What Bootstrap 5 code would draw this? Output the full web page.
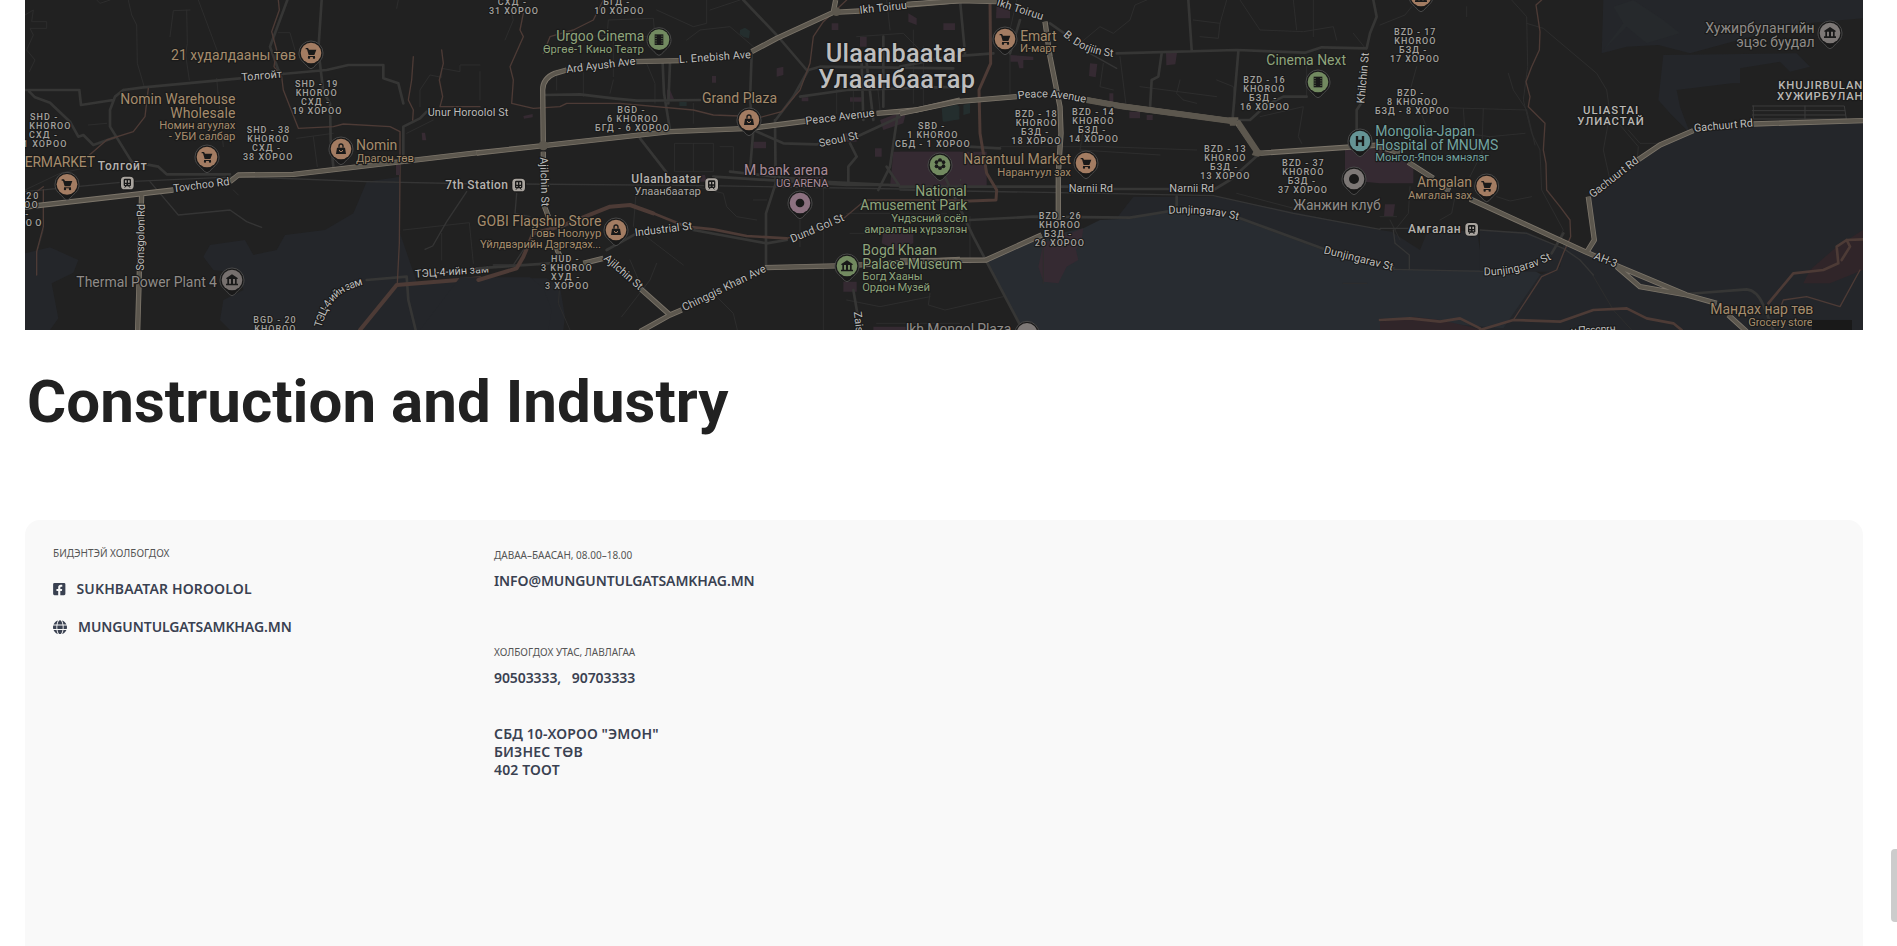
<!DOCTYPE html>
<html lang="mn">
<head>
<meta charset="utf-8">
<meta name="viewport" content="width=device-width, initial-scale=1">
<title>Construction and Industry</title>
<link href="https://cdn.jsdelivr.net/npm/bootstrap@5.3.0/dist/css/bootstrap.min.css" rel="stylesheet">
<style>
html,body{height:100%;overflow:hidden}
body{font-family:"Noto Sans","Open Sans",sans-serif;background:#fff}
.site-shell{padding:0 34px 0 25px}
.city-map{height:330px;background:#212121;font-family:Roboto,"Noto Sans",sans-serif}
.site-title{font:700 60px/70px Roboto,sans-serif;letter-spacing:.06px;color:#212121;margin:37px 0 83px 2px;white-space:nowrap}
.contact-panel{background:#f9f9f9;border-radius:15px 15px 0 0;height:426px;padding:0 28px}
.contact-first{width:441px;padding-top:26px}
.contact-second{padding-top:28px}
.tiny{font-size:10px;line-height:14px;color:#555;white-space:nowrap}
.strong-line{font-size:14px;line-height:18px;font-weight:600;color:#3a4151;white-space:nowrap}
.gap-after{margin-top:20px}
.gap-value{margin-top:10px}
.gap-phone{margin-top:55px}
.gap-address{margin-top:38px}
.link-name{margin-left:11px}
.airy{letter-spacing:.14px}
.snug{letter-spacing:-.09px}
.page-thumb{right:0;top:849px;width:6px;height:73px;background:#ccc;border-radius:4px 0 0 4px}
/* map strokes and labels */
.fine,.minor,.brown,.rail{fill:none;stroke-linejoin:round;stroke-linecap:round}
.fine{stroke:#2d2d2d;stroke-width:3}
.minor{stroke:#363635;stroke-width:8}
.rail{stroke:#353535;stroke-width:4}
.brown{stroke:#4d3b36;stroke-width:4}
.wide{stroke-width:12}
.case{fill:none;stroke:#7c756a;stroke-width:16;stroke-linejoin:round}
.major{fill:none;stroke:#5c574e;stroke-width:11;stroke-linejoin:round}
.city-map text{paint-order:stroke;stroke:#1b1b1b;stroke-width:7px;stroke-linejoin:round}
.poi{font-size:42px}.sub{font-size:34px}
.shop{fill:#a58c6c}.leaf{fill:#8fa57c}.rose{fill:#a98a98}.aqua{fill:#72a3a0}.ash{fill:#8f8b88}
.street{font-size:33px;fill:#bdbdbb}
.khoroo{font-size:27px;font-weight:500;fill:#a3a19e}
.stn{font-size:36px;font-weight:500;fill:#b5b2ae}
.town{font-size:34px;font-weight:500;fill:#b9b7b4}
.city{font-size:76px;font-weight:500;fill:#bebebe}
</style>
</head>
<body>
<div class="site-shell">
<div class="city-map overflow-hidden">
<svg class="d-block" width="1838" height="330" viewBox="25 0 1838 330" role="img" aria-label="Ulaanbaatar">
<defs>
<g id="pin"><path d="M-36 0A36 36 0 1 1 36 0C36 17 27 24 17 33L7 44Q0 50-7 44L-17 33C-27 24-36 17-36 0Z" fill="#191919" stroke="#484848" stroke-width="3"/><circle r="31" fill="currentColor"/></g>
<g id="cart" fill="#191919"><path d="M-16-15h7l3 5H16L10 6H-7L-12-11h-4z"/><path d="M-9 9H12v3H-9z"/><circle cx="-6" cy="14" r="3.5"/><circle cx="9" cy="14" r="3.5"/></g>
<g id="bag"><path d="M-15 15L-12-4H12L15 15Z" fill="#191919"/><path d="M-6-4V-9a6 6 0 0 1 12 0v5" fill="none" stroke="#191919" stroke-width="4"/><path d="M-5 3a5 5 0 0 0 10 0" fill="none" stroke="currentColor" stroke-width="3"/></g>
<g id="film"><path d="M-13-16H13V16H-13Z" fill="#191919"/><path d="M-9-12v25M9-12v25" stroke="currentColor" stroke-width="3" stroke-dasharray="3 4"/></g>
<g id="hall" fill="#191919"><path d="M-17-6L0-17 17-6V-3H-17zM-14-3h5V11h-5zM-3-3h6V11h-6zM9-3h5V11H9zM-18 11H18v5H-18z"/></g>
<g id="flower" fill="#191919"><circle cy="-11" r="6"/><circle cx="10" cy="-5" r="6"/><circle cx="-10" cy="-5" r="6"/><circle cx="10" cy="7" r="6"/><circle cx="-10" cy="7" r="6"/><circle cy="12" r="6"/><circle r="6" fill="none" stroke="currentColor" stroke-width="3"/></g>
<g id="train"><circle r="23" fill="#191919"/><rect x="-19" y="-19" width="38" height="38" rx="11" fill="#aaa59f"/><rect x="-11" y="-13" width="22" height="23" rx="4" fill="#191919"/><path d="M-7-8h5v7h-5zM2-8h5v7H2zM-7 3h4v3h-4zM3 3h4v3H3z" fill="#aaa59f"/><path d="M-8 14l4-5M8 14L4 9" stroke="#191919" stroke-width="3"/></g>
</defs>

<!-- west -->
<g transform="scale(.33333)">
<path fill="#24262a" d="M75 760L150 742 235 780 220 818 155 850 175 955 150 990H75ZM610 770L630 735 735 720 760 765 830 750 855 705 975 690 1060 640 1100 545 1200 530V700L1300 990H690L660 960 670 900 730 870 720 820 640 810ZM1195 850L1440 835H1640L1680 860 1695 950 1690 990H1195Z"/>
<g class="fine"><path d="M75 45L100 30 95 65H140V85H90L100 105 80 150 105 180 88 215M330 0L300 10 290 0M385 0L395 45 410 75 412 190 432 258M510 110L520 32 570 30M560 30L562 130 557 165 568 240M595 0L662 180M835 98H870L885 150M890 415L1000 400M940 410L952 500M265 375L320 370M650 235L658 320 670 440M1220 400L1300 360M1210 690L1408 668 1420 790M1325 700V780M1195 0L1190 25M1260 320V270L1290 225 1325 232V205L1380 215V195H1440M130 690L110 760M700 570L715 585M75 570L180 520 270 500M1440 215V300"/></g>
<g class="minor"><path d="M75 270H238L243 315 340 300M88 275L105 292 150 308 210 365 235 410 250 405 280 435 350 410M862 0L810 140 835 210 850 222M965 0L955 150 970 275 990 310 992 420 1000 500M370 270L345 290 330 330V380L395 485 475 500 500 523H690M370 270L430 262 720 235M846 222L980 210 1045 195H1150V235L1195 250 1210 310M1210 480V380L1260 355 1280 335M1220 830L1225 900 1247 990M1100 840L1220 830" /></g>
<path class="rail" d="M75 575L385 545 720 530 1100 545 1440 552M450 545L480 580 535 645 690 630 740 665 785 682M1275 748L1298 738 1340 665 1400 575"/>
<path class="brown" d="M835 0L838 30 815 95 830 150 822 200 845 230 850 270 895 385 1000 380 1030 372 1170 380 1200 395V520L1198 730 1192 850M445 265L435 350 400 395 320 420 240 490M130 560L75 600M130 570V680L110 755V825M1240 170L1235 240 1225 300 1240 330 1238 360M1325 150L1330 190 1318 240 1328 290 1320 320H1440"/>
<path class="brown wide" d="M1080 990L1190 855 1440 835"/>
<path fill="#372b33" d="M1265 398h10l4 23h-12zM1188 495h12v30h-12z"/>
<path class="case" d="M75 621L520 570M690 545L715 525 880 523 1440 457M425 580L413 990"/><path class="major" d="M75 621L520 570M690 545L715 525 880 523 1440 457M425 580L413 990"/>
<g color="#a37c62"><use href="#pin" x="933" y="159"/><use href="#cart" x="933" y="159"/><use href="#pin" x="621" y="471"/><use href="#cart" x="621" y="471"/><use href="#pin" x="201" y="553"/><use href="#cart" x="201" y="553"/><use href="#pin" x="1023" y="447"/><use href="#bag" x="1023" y="447"/></g>
<g color="#76706e"><use href="#pin" x="696" y="840"/><use href="#hall" x="696" y="840"/></g>
<use href="#train" x="382" y="549"/>
<text class="poi shop" x="513" y="180" textLength="375">21 худалдааны төв</text>
<text class="poi shop" x="361" y="313" textLength="345">Nomin Warehouse</text>
<text class="poi shop" x="511" y="355" textLength="195">Wholesale</text>
<text class="sub shop" x="478" y="388" textLength="228">Номин агуулах</text>
<text class="sub shop" x="506" y="420" textLength="200">- УБИ салбар</text>
<text class="poi shop" x="1068" y="451" textLength="124">Nomin</text>
<text class="sub shop" x="1068" y="486" textLength="174">Драгон төв</text>
<text class="poi shop" x="74" y="502" textLength="211">ERMARKET</text>
<text class="stn" x="293" y="511" textLength="147">Толгойт</text>
<text class="poi ash" x="229" y="862" textLength="422">Thermal Power Plant 4</text>
<g class="khoroo"><text x="885" y="262" textLength="127">SHD - 19</text><text x="887" y="289" textLength="123">KHOROO</text><text x="903" y="316" textLength="84">СХД -</text><text x="877" y="343" textLength="147">19 ХОРОО</text>
<text x="740" y="399" textLength="128">SHD - 38</text><text x="742" y="426" textLength="123">KHOROO</text><text x="756" y="453" textLength="84">СХД -</text><text x="729" y="480" textLength="148">38 ХОРОО</text>
<text x="90" y="360" textLength="82">SHD -</text><text x="88" y="387" textLength="123">KHOROO</text><text x="87" y="414" textLength="84">СХД -</text><text x="50" y="441" textLength="149">11 ХОРОО</text>
<text x="79" y="597" textLength="36">20</text><text x="72" y="624" textLength="41">OO</text><text x="76" y="651">-</text><text x="50" y="678" textLength="74">РОО</text>
<text x="760" y="969" textLength="127">BGD - 20</text><text x="763" y="996" textLength="123">KHOROO</text></g>
<g class="street"><text transform="translate(725 243) rotate(-5)" textLength="122">Толгойт</text><text transform="translate(521 577) rotate(-7.500)" textLength="170">Tovchoo Rd</text><text transform="translate(431 812) rotate(-89)" textLength="200">Sonsgolon Rd</text>
<text x="1283" y="348" textLength="242">Unur Horoolol St</text><path id="tec" d="M964 984C990 895 1020 870 1110 849" fill="none"/><text><textPath href="#tec" textLength="192">ТЭЦ-4-ийн зам</textPath></text><text transform="translate(1246 833) rotate(-4)" textLength="222">ТЭЦ-4-ийн зам</text></g>
<text class="stn" x="1336" y="567" textLength="188">7th Station</text>
</g>

<!-- centre -->
<g transform="translate(480) scale(.33333)">
<path fill="#24262a" d="M-60 832H150L190 865 215 930 205 990H-180Z"/>
<g fill="#352a32"><path d="M1240 455H1520V560H1230ZM1210 690H1300V730L1250 750 1205 730ZM1090 845h40v30h-40zM568 265l15 35h-22v-30zM130 348l28-6v10l-26 4zM696 228h12v20h-12zM890 205l20-5v25l-20 5zM1055 70h20v20h-20zM965 292h20v12h-20zM1110 292h35v13h-35zM820 425h38v20h-38zM1185 445h20v25h-20zM1140 110h20v30h-20zM1090 400h40v25h-40zM1180 980h120v10h-120zM920 530h110v15H920zM1390 70h35v20h-35zM1285 40l25 15v20l-25-10zM1200 360l80-30-10 40-60 20zM580 525h95l5 20H580z"/></g>
<g fill="#242e2e"><path d="M780 90l15-7 15 10-3 22-16-4-12-8zM1390 328l48-10v40l-48 8zM598 306h22v12h-22z"/></g>
<g class="fine"><path d="M275 95L310 110 400 105V230M380 120L385 60 520 55 525 110H380M530 30L640 80 680 70V0M620 120L660 90 750 80 820 140M500 190L525 250V310M400 240L390 280M640 310V370M585 430H700V515H585ZM640 430V515M720 440H760V515M650 560L730 580 740 620 770 650 830 660M470 560L460 680 610 795M530 790L510 840 425 950M710 890L760 940 772 990M240 850L235 910 270 990M480 850L450 780M1030 560V990M960 660V740M1100 640H1400M1110 700H1200M820 600H860M1100 900L1200 920 1350 890M1190 970H1440M230 210V270M310 190V290M85 0L100 60 75 120M780 0L690 30M1130 110L1270 100 1340 170M1220 0L1230 90M1300 90V310M1330 140V330M1070 260V340M1120 240V340M1190 230L1200 330"/></g>
<g class="minor"><path d="M190 285L300 283 400 295 470 302 660 300M548 190L552 280 570 390M570 190L565 310M480 415L560 518M815 165L810 300 820 390 810 510M885 360L887 550 858 640V800M887 360L940 290 985 210 1020 200 1420 205M980 210L890 105 790 0M820 390L910 430 1010 433M1010 433L1130 410 1260 350M1110 430L1130 470 1105 500V550M1145 190L1150 360M1255 330L1230 500 1195 570M1210 110V320M750 515L1020 545 1440 565M700 530L1100 555H1440M1220 500L1260 560M1180 360L1160 190M960 290L1100 270 1440 260M1120 870L1132 940M1380 535L1440 540M640 690L860 730 920 720M380 750L470 700M-10 805L210 790"/></g>
<path class="rail" d="M120 552L680 557 1440 570M110 580L105 640 150 650M40 795L100 795 130 750"/>
<path class="brown" d="M130 40L120 90 130 110 90 200 100 240 95 310 160 325 240 320 260 310 420 310 640 330 700 345 780 348 830 355 905 335 960 270 990 190 1000 110 1030 65 1100 0M370 0L340 60 280 90 210 110 190 160M1160 600H1440M1145 610L1085 660M1040 680L920 715"/>
<path class="brown wide" d="M-5 840L110 805 130 770 160 700 240 680 390 620 450 615 520 640"/><path class="brown" style="stroke-width:8" d="M520 640L620 680 700 688 800 708 920 715"/>
<path class="case" d="M-10 459L190 437 570 395 810 385 980 363M1190 340L1310 330 1440 300M190 437L188 270Q188 235 225 220L260 210M460 185L600 182M815 155L890 115 1060 37 1067 0M1060 37L1140 33M1280 15L1440 2M190 455V475M190 610L205 650M228 740L240 770M310 790L370 775M480 865L570 945 480 995M570 945L605 930M855 803L1100 797 1440 778"/>
<path class="major" d="M-10 459L190 437 570 395 810 385 980 363M1190 340L1310 330 1440 300M190 437L188 270Q188 235 225 220L260 210M460 185L600 182M815 155L890 115 1060 37 1067 0M1060 37L1140 33M1280 15L1440 2M190 455V475M190 610L205 650M228 740L240 770M310 790L370 775M480 865L570 945 480 995M570 945L605 930M855 803L1100 797 1440 778"/>
<circle cx="190" cy="437" r="14" fill="#5c574e"/><circle cx="1069" cy="35" r="13" fill="#5c574e"/>
<g color="#728a60"><use href="#pin" x="537" y="119"/><use href="#film" x="537" y="119"/><use href="#pin" x="1101" y="798"/><use href="#hall" x="1101" y="798"/></g>
<g color="#a37c62"><use href="#pin" x="807" y="360"/><use href="#bag" x="807" y="360"/><use href="#pin" x="408" y="690"/><use href="#bag" x="408" y="690"/></g>
<g color="#8c7180"><use href="#pin" x="960" y="609"/></g><circle cx="960" cy="609" r="13" fill="#191919"/>
<use href="#train" x="116" y="555"/><use href="#train" x="695" y="554"/>
<text class="poi leaf" x="229" y="124" textLength="264">Urgoo Cinema</text><text class="sub leaf" x="189" y="159" textLength="303">Өргөө-1 Кино Театр</text>
<text class="poi shop" x="666" y="310" textLength="225">Grand Plaza</text>
<text class="poi rose" x="792" y="526" textLength="252">M bank arena</text><text class="sub rose" x="888" y="560" textLength="157">UG ARENA</text>
<text class="poi shop" x="-9" y="679" textLength="373">GOBI Flagship Store</text><text class="sub shop" x="153" y="712" textLength="211">Говь Ноолуур</text><text class="sub shop" x="0" y="745" textLength="363">Үйлдвэрийн Дэргэдэх...</text>
<text class="stn" x="454" y="550" textLength="209">Ulaanbaatar</text><text class="sub" fill="#a9a6a3" x="463" y="584" textLength="200">Улаанбаатар</text>
<text class="poi leaf" x="1147" y="765" textLength="224">Bogd Khaan</text><text class="sub leaf" x="1147" y="840" textLength="181">Богд Хааны</text><text class="sub leaf" x="1147" y="873" textLength="203">Ордон Музей</text>
<text class="poi ash" x="1277" y="1002" textLength="317">Ikh Mongol Plaza</text>
<g class="khoroo"><text x="53" y="16" textLength="85">СХД -</text><text x="27" y="43" textLength="147">31 ХОРОО</text><text x="370" y="16" textLength="78">БГД -</text><text x="343" y="43" textLength="147">10 ХОРОО</text>
<text x="412" y="339" textLength="82">BGD -</text><text x="381" y="366" textLength="152">6 KHOROO</text><text x="345" y="393" textLength="222">БГД - 6 ХОРОО</text>
<text x="213" y="786" textLength="83">HUD -</text><text x="183" y="813" textLength="152">3 KHOROO</text><text x="213" y="840" textLength="85">ХУД -</text><text x="195" y="867" textLength="130">3 ХОРОО</text></g>
<g class="street"><text transform="translate(260 219) rotate(-7)" textLength="209">Ard Ayush Ave</text><text transform="translate(598 189) rotate(-4)" textLength="216">L. Enebish Ave</text><text transform="translate(1140 41) rotate(-6)" textLength="143">Ikh Toiruu</text><text transform="translate(978 374) rotate(-7)" textLength="208">Peace Avenue</text><text transform="translate(1019 441) rotate(-12)" textLength="120">Seoul St</text><text transform="translate(180 472) rotate(88)" textLength="148">Ajilchin St</text><text transform="translate(466 709) rotate(-7)" textLength="173">Industrial St</text><text transform="translate(937 728) rotate(-23)" textLength="171">Dund Gol St</text><text transform="translate(370 778) rotate(41)" textLength="142">Ajilchin St</text><text transform="translate(613 934) rotate(-26)" textLength="275">Chinggis Khan Ave</text><text transform="translate(1121 936) rotate(83)">Zaisan</text></g>
</g>

<!-- east centre -->
<g transform="translate(900) scale(.33333)">
<path fill="#24262a" d="M650 655L700 590 950 590 1200 640 1440 690 1475 695 1560 750 1580 700 1730 690 1750 810 1440 810 1280 750 1010 655 690 655Z"/>
<path fill="#282c31" d="M258 785L430 710 550 685 600 660 700 655 800 630 1010 655 1270 750 1450 810H1900L1935 830 1860 960 1900 990H368Z"/>
<g fill="#352a32"><path d="M430 730L550 685 545 720 528 750 535 780 500 800 475 850 430 845 415 800ZM570 190l22 2-5 40-20-4zM798 158h33l-5 35-27 3zM290 5l40 5v45h-42zM330 165l70 5v10h-30v25h-12l-5-20h-22zM628 280h12v40h-12zM688 335h32v20h-32zM740 345h18v15h-18zM1335 450L1440 445 1540 500 1540 550 1440 550 1335 540ZM1455 613h30l-5 35h-28zM0 455H180V560H0Z"/></g>
<path fill="#242e2e" d="M125 325l48-12 5 45-50 5zM190 315l20-5v30l-20 5z"/>
<g class="fine"><path d="M350 0L330 90V280M740 0L705 15 690 60 640 100 600 80 540 130M880 60L960 70 980 0M960 70L955 115 900 110M1020 0L1080 90 1210 95 1300 80 1310 120M1180 0L1190 90M1240 0V110M640 270L600 260 610 190M660 170L680 330M840 240L830 280 850 300M560 330L540 450 780 465M1080 350L1210 320 1195 410 1205 430M950 240L1000 260 1005 310M300 440L610 440 890 450M1220 170V290M90 880L85 915 135 930 310 890M210 650V790M430 740V850M1330 850H1400M1010 580L1200 630M1360 100L1400 150M850 300L890 310M720 260L950 290"/></g>
<g class="minor"><path d="M650 160L1010 150 1215 158 1265 142 1400 145 1410 100 1430 50 1420 0M1015 155L998 355M785 160L775 230 755 240 750 325M865 0L875 150M450 70L500 105M1000 360H1050L1100 315 1150 290H1220M0 560H505M210 660L400 650 690 653 830 630V590M1080 460L990 540 940 570M640 567H810M130 520L220 710 368 990M205 440L300 445M1370 390V330L1390 300M0 200L150 170 280 160M330 160L360 60M180 0L195 160M1020 655L1280 750M1450 803H1480"/></g>
<path class="rail" d="M0 570L600 580 940 587 1180 640 1440 688M560 155L650 205"/>
<path class="brown" style="stroke-width:9" d="M270 0L272 190 237 270 240 400 260 520 290 570 288 600 150 605"/>
<path class="case" d="M20 13L180 2 290 5M0 340L170 305 350 290M560 300L660 318 1010 365M435 65L450 170 480 320 483 400 475 520V660M425 705L258 780 0 783M1010 365L1075 460 1440 435"/>
<path class="major" d="M20 13L180 2 290 5M0 340L170 305 350 290M560 300L660 318 1010 365M435 65L450 170 480 320 483 400 475 520V660M425 705L258 780 0 783M1010 365L1075 460 1440 435"/>
<path d="M560 300L660 318 1010 365" stroke="#5c574e" stroke-width="18" fill="none"/><path fill="#5c574e" d="M985 352h30v25h-25zM1000 365l60 90-5 10 20 5 25-10-20-10-60-90z"/>
<g color="#a37c62"><use href="#pin" x="315" y="117"/><use href="#cart" x="315" y="117"/><use href="#pin" x="558" y="489"/><use href="#cart" x="558" y="489"/></g>
<g color="#728a60"><use href="#pin" x="120" y="495"/><use href="#flower" x="120" y="492"/><use href="#pin" x="1254" y="246"/><use href="#film" x="1254" y="246"/></g>
<g color="#7d7876"><use href="#pin" x="1362" y="537"/><use href="#pin" x="381" y="1000"/></g><circle cx="1362" cy="537" r="15" fill="#191919"/>
<text class="poi leaf" x="46" y="588" textLength="154">National</text><text class="poi leaf" x="-119" y="630" textLength="321">Amusement Park</text><text class="sub leaf" x="-26" y="666" textLength="229">Үндэсний соёл</text><text class="sub leaf" x="-107" y="699" textLength="309">амралтын хүрээлэн</text><text class="poi leaf" x="-113" y="807" textLength="299">Palace Museum</text>
<text class="city" x="-223" y="186" textLength="419">Ulaanbaatar</text><text class="city" x="-245" y="263" textLength="470">Улаанбаатар</text>
<text class="poi shop" x="361" y="124" textLength="109">Emart</text><text class="sub shop" x="360" y="155" textLength="109">И-март</text>
<text class="poi shop" x="190" y="493" textLength="323">Narantuul Market</text><text class="sub shop" x="292" y="528" textLength="221">Нарантуул зах</text>
<text class="poi leaf" x="1099" y="196" textLength="239">Cinema Next</text>
<g class="khoroo"><text x="54" y="388" textLength="79">SBD -</text><text x="22" y="415" textLength="150">1 KHOROO</text><text x="-15" y="442" textLength="224">СБД - 1 ХОРОО</text>
<text x="345" y="351" textLength="125">BZD - 18</text><text x="347" y="378" textLength="123">KHOROO</text><text x="363" y="405" textLength="82">БЗД -</text><text x="334" y="432" textLength="147">18 ХОРОО</text>
<text x="516" y="345" textLength="125">BZD - 14</text><text x="517" y="372" textLength="123">KHOROO</text><text x="534" y="399" textLength="82">БЗД -</text><text x="507" y="426" textLength="147">14 ХОРОО</text>
<text x="1030" y="249" textLength="124">BZD - 16</text><text x="1030" y="276" textLength="123">KHOROO</text><text x="1047" y="303" textLength="82">БЗД -</text><text x="1020" y="330" textLength="147">16 ХОРОО</text>
<text x="912" y="456" textLength="125">BZD - 13</text><text x="913" y="483" textLength="123">KHOROO</text><text x="930" y="510" textLength="82">БЗД -</text><text x="901" y="537" textLength="147">13 ХОРОО</text>
<text x="1146" y="498" textLength="125">BZD - 37</text><text x="1147" y="525" textLength="123">KHOROO</text><text x="1163" y="552" textLength="82">БЗД -</text><text x="1134" y="579" textLength="147">37 ХОРОО</text>
<text x="416" y="657" textLength="126">BZD - 26</text><text x="417" y="684" textLength="123">KHOROO</text><text x="432" y="711" textLength="82">БЗД -</text><text x="404" y="738" textLength="148">26 ХОРОО</text></g>
<g class="street"><text transform="translate(289 16) rotate(18)" textLength="144">Ikh Toiruu</text><path id="dorj" d="M488 106Q550 165 645 171" fill="none"/><text><textPath href="#dorj" textLength="168">B. Dorjiin St</textPath></text><path id="peace" d="M355 298Q450 282 555 309" fill="none"/><text><textPath href="#peace" textLength="202">Peace Avenue</textPath></text><text x="506" y="577" textLength="133">Narnii Rd</text><text x="808" y="577" textLength="134">Narnii Rd</text><path id="dun" d="M805 641Q920 635 1015 661" fill="none"/><text><textPath href="#dun" textLength="211">Dunjingarav St</textPath></text><text transform="translate(1393 311) rotate(-85)" textLength="153">Khilchin St</text></g>
</g>

<!-- east -->
<g transform="translate(1380) scale(.33333)">
<path fill="#24262a" d="M670 0H1449V55L1280 70 1150 100 930 160 835 135 740 140 665 160ZM850 165L1250 160 1290 200 1230 215 1200 185 1080 205 1080 250 1055 250 890 270 900 320 930 400 870 340 835 300ZM940 395L1120 375 1449 365V990H0V955L370 985 480 825 540 800 550 730 620 750 645 720 625 590 840 435Z"/>
<path fill="#24262a" d="M300 692L440 695 560 750 530 815H300Z"/>
<path fill="#282c2d" opacity=".5" d="M700 20L760 0 850 60 900 100 800 130 740 80 670 150 730 70Z"/>
<path fill="#302529" d="M0 965L100 950 180 960 270 980 300 990H0ZM1270 850L1290 810 1370 740 1449 690V810L1350 850Z"/>
<g class="fine"><path d="M0 75L75 45 95 20M260 20V50M110 200L85 290M85 320L440 330M250 325L255 400 330 410 300 470 270 530M310 325L305 470M125 345L160 430M395 0L440 50 443 200 430 300 455 400 480 450 485 570 550 690 510 770M440 70L490 85 650 220 680 270 690 340 670 450 690 540M690 340L775 440 770 500M745 390L780 430H850M385 220L400 270 440 330 465 435M0 650H50M45 690L85 640 90 560M60 720L30 660M180 660L215 640 225 590M350 590L390 603 455 590M330 410L435 400M635 820L700 930 755 990"/><path d="M1117 318H1393L1399 357H1120V318M1117 332H1395M1117 345H1397M1275 318V357" stroke="#3b3b3b"/></g>
<g class="minor"><path d="M550 700L515 760M920 882L1100 868Q1130 870 1150 915L1180 990" /></g><path class="rail" d="M0 685H240M300 690L440 700 550 745 600 780 640 825M40 690L45 730 88 765V810M40 808L310 814"/>
<path class="brown" d="M485 0L468 15 480 95 478 150 455 200 438 245 450 290 445 320 495 370 490 450 498 490 500 570 540 620 570 660 572 710 550 760 530 810 485 830 400 960M1195 940L1210 900 1280 890 1380 920 1440 810"/>
<path class="brown" style="stroke-width:8" d="M300 990L400 960 540 965 640 930 740 925 800 955 880 970 905 990M0 960L90 955 180 965 240 955 300 985M1165 910L1240 820 1330 810 1375 790 1370 740 1400 720 1449 718M1400 720L1410 740 1385 780"/>
<path class="case" d="M85 487L160 535M195 565L210 572M270 597L620 757 650 770M705 795L920 885 1010 910M710 800L780 860 920 885M620 757L643 720 625 590M770 482L840 435 940 392M1120 372L1449 362M1045 945L1100 995M-15 436L60 460"/>
<path class="major" d="M85 487L160 535M195 565L210 572M270 597L620 757 650 770M705 795L920 885 1010 910M710 800L780 860 920 885M620 757L643 720 625 590M770 482L840 435 940 392M1120 372L1449 362M1045 945L1100 995M-15 436L60 460"/>
<g color="#659495"><use href="#pin" x="-60" y="423"/></g><path d="M-69 408v30M-51 408v30M-69 423h20" stroke="#191919" stroke-width="7"/>
<g color="#a37c62"><use href="#pin" x="123" y="-12"/><use href="#hall" x="123" y="-10"/><use href="#pin" x="320" y="558"/><use href="#cart" x="320" y="558"/></g>
<g color="#7d7876"><use href="#pin" x="1350" y="99"/><use href="#hall" x="1350" y="98"/></g><use href="#train" x="275" y="688"/>
<text class="poi ash" x="-260" y="631" textLength="262">Жанжин клуб</text>
<text class="poi ash" x="976" y="100" textLength="328">Хужирбулангийн</text><text class="poi ash" x="1069" y="142" textLength="235">эцэс буудал</text>
<text class="poi aqua" x="-14" y="409" textLength="299">Mongolia-Japan</text><text class="poi aqua" x="-14" y="451" textLength="369">Hospital of MNUMS</text><text class="sub aqua" x="-14" y="483" textLength="341">Монгол-Япон эмнэлэг</text>
<text class="poi shop" x="111" y="562" textLength="165">Amgalan</text><text class="sub shop" x="84" y="597" textLength="192">Амгалан зах</text><text class="stn" x="84" y="700" textLength="158">Амгалан</text>
<text class="poi shop" x="991" y="942" textLength="309">Мандах нар төв</text><text class="sub shop" x="1105" y="978" textLength="193">Grocery store</text><rect x="1296" y="960" width="120" height="30" fill="#191919"/>
<g class="town"><text x="609" y="342" textLength="166">ULIASTAI</text><text x="592" y="375" textLength="199">УЛИАСТАЙ</text><text x="1195" y="267" textLength="252">KHUJIRBULAN</text><text x="1191" y="300" textLength="257">ХУЖИРБУЛАН</text></g>
<g class="khoroo"><text x="42" y="105" textLength="124">BZD - 17</text><text x="43" y="132" textLength="123">KHOROO</text><text x="57" y="159" textLength="82">БЗД -</text><text x="30" y="186" textLength="147">17 ХОРОО</text><text x="51" y="288" textLength="79">BZD -</text><text x="21" y="315" textLength="151">8 KHOROO</text><text x="-15" y="342" textLength="222">БЗД - 8 ХОРОО</text></g>
<g class="street"><text transform="translate(-170 760) rotate(14)" textLength="213">Dunjingarav St</text><text transform="translate(943 395) rotate(-5)" textLength="177">Gachuurt Rd</text><text transform="translate(638 595) rotate(-38)" textLength="178">Gachuurt Rd</text><path id="dun2" d="M311 826Q420 828 517 776" fill="none"/><text><textPath href="#dun2" textLength="212">Dunjingarav St</textPath></text><text transform="translate(640 776) rotate(22)" textLength="72">AH-3</text><text transform="translate(572 1004) rotate(-3)" textLength="136">ц Песоргч</text></g>
</g>
</svg>
</div>
<h1 class="site-title">Construction and Industry</h1>
<section class="contact-panel d-flex">
<div class="contact-first flex-shrink-0">
<div class="tiny">БИДЭНТЭЙ ХОЛБОГДОХ</div>
<div class="strong-line gap-after d-flex align-items-center"><svg width="12.500" height="14" viewBox="0 0 448 512" fill="currentColor"><path d="M400 32H48A48 48 0 0 0 0 80v352a48 48 0 0 0 48 48h137.250V327.690h-63V256h63v-54.640c0-62.150 37-96.480 93.670-96.480 27.140 0 55.520 4.840 55.520 4.840v61h-31.270c-30.810 0-40.420 19.120-40.420 38.730V256h68.780l-11 71.690h-57.780V480H400a48 48 0 0 0 48-48V80a48 48 0 0 0-48-48z"/></svg><span class="link-name airy">SUKHBAATAR HOROOLOL</span></div>
<div class="strong-line gap-after d-flex align-items-center"><svg width="14" height="14.500" viewBox="0 0 496 512" fill="currentColor"><path d="M336.500 160C322 70.700 287.800 8 248 8s-74 62.700-88.500 152h177zM152 256c0 22.200 1.200 43.500 3.300 64h185.300c2.100-20.500 3.300-41.800 3.300-64s-1.200-43.500-3.300-64H155.300c-2.100 20.500-3.300 41.800-3.300 64zm324.700-96c-28.600-67.900-86.500-120.400-158-141.600 24.400 33.800 41.200 84.700 50 141.600h108zM177.200 18.400C105.800 39.600 47.800 92.100 19.300 160h108c8.700-56.900 25.500-107.800 49.900-141.600zM487.400 192H372.700c2.100 21 3.300 42.500 3.300 64s-1.200 43-3.300 64h114.600c5.500-20.500 8.600-41.800 8.600-64s-3.100-43.500-8.500-64zM120 256c0-21.500 1.200-43 3.300-64H8.600C3.200 212.500 0 233.800 0 256s3.200 43.500 8.600 64h114.600c-2-21-3.200-42.500-3.200-64zm39.500 96c14.500 89.300 48.700 152 88.500 152s74-62.700 88.500-152h-177zm159.300 141.600c71.400-21.200 129.400-73.700 158-141.600h-108c-8.800 56.900-25.600 107.800-50 141.600zM19.300 352c28.600 67.900 86.500 120.400 158 141.600-24.400-33.800-41.200-84.700-50-141.600h-108z"/></svg><span class="link-name snug">MUNGUNTULGATSAMKHAG.MN</span></div>
</div>
<div class="contact-second">
<div class="tiny">ДАВАА–БААСАН, 08.00–18.00</div>
<div class="strong-line gap-value snug">INFO@MUNGUNTULGATSAMKHAG.MN</div>
<div class="tiny gap-phone">ХОЛБОГДОХ УТАС, ЛАВЛАГАА</div>
<div class="strong-line gap-value snug">90503333, &nbsp; 90703333</div>
<div class="strong-line gap-address airy">СБД 10-ХОРОО "ЭМОН"<br>БИЗНЕС ТӨВ<br>402 ТООТ</div>
</div>
</section>
</div>
<div class="page-thumb position-absolute"></div>
<script src="https://cdn.jsdelivr.net/npm/bootstrap@5.3.0/dist/js/bootstrap.bundle.min.js"></script>
</body>
</html>
